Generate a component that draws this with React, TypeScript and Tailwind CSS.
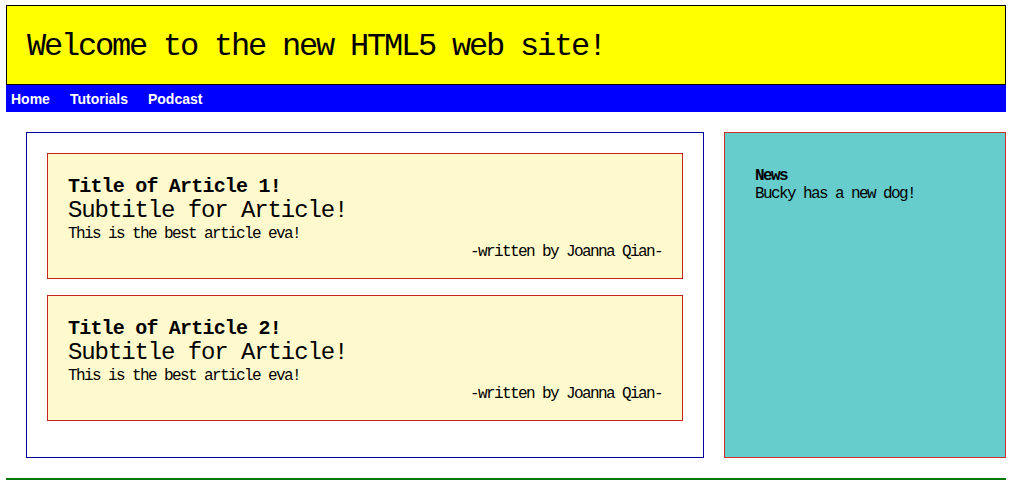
import React from "react";

const mono = "font-['Liberation_Mono',monospace]";

interface ArticleProps {
  title: string;
  subtitle: string;
  body: string;
  author: string;
}

function Article({ title, subtitle, body, author }: ArticleProps) {
  return (
    <article className="mb-4 border border-[#cc2020] bg-[#fffacd] px-5 pt-[23px] pb-4 text-black">
      <h2 className="text-[20px] leading-[20px] font-bold tracking-[-0.8px]">{title}</h2>
      <h3 className="text-[24px] leading-[28px] tracking-[-1.1px]">{subtitle}</h3>
      <p className="text-[16px] leading-[18px] tracking-[-1.6px]">{body}</p>
      <footer className="text-right text-[16px] leading-[19px] tracking-[-1.6px]">{author}</footer>
    </article>
  );
}

export default function App() {
  const articles = [
    {
      title: "Title of Article 1!",
      subtitle: "Subtitle for Article!",
      body: "This is the best article eva!",
      author: "-written by Joanna Qian-",
    },
    {
      title: "Title of Article 2!",
      subtitle: "Subtitle for Article!",
      body: "This is the best article eva!",
      author: "-written by Joanna Qian-",
    },
  ];

  return (
    <div className={`min-h-[497px] bg-white pt-[5px] pl-[6px] ${mono}`}>
      <div className="w-[1000px]">
        {/* site header */}
        <header className="flex h-[80px] items-center border border-black bg-[#ffff00] pt-[3px] pl-5">
          <h1 className="text-[32px] leading-none tracking-[-2.2px] text-black">
            Welcome to the new HTML5 web site!
          </h1>
        </header>

        {/* navigation bar */}
        <nav className="flex h-[27px] items-center gap-5 bg-[#0000ff] pt-[1px] pl-[5px] font-['Liberation_Sans',sans-serif] text-[14px] font-bold text-white">
          <a href="#">Home</a>
          <a href="#">Tutorials</a>
          <a href="#">Podcast</a>
        </nav>

        <div className="mt-5 flex gap-5 pl-5">
          <section className="h-[326px] w-[678px] border border-[#0000a0] px-5 pt-5">
            {articles.map((a) => (
              <Article key={a.title} {...a} />
            ))}
          </section>

          <aside className="h-[326px] w-[282px] border border-[#cc3030] bg-[#66cccc] px-[30px] pt-[34px] text-[16px] leading-[18px] tracking-[-1.6px] text-black">
            <h4 className="font-bold">News</h4>
            <p>Bucky has a new dog!</p>
          </aside>
        </div>

        <footer className="mt-5 border-t-2 border-[#087808]" />
      </div>
    </div>
  );
}
